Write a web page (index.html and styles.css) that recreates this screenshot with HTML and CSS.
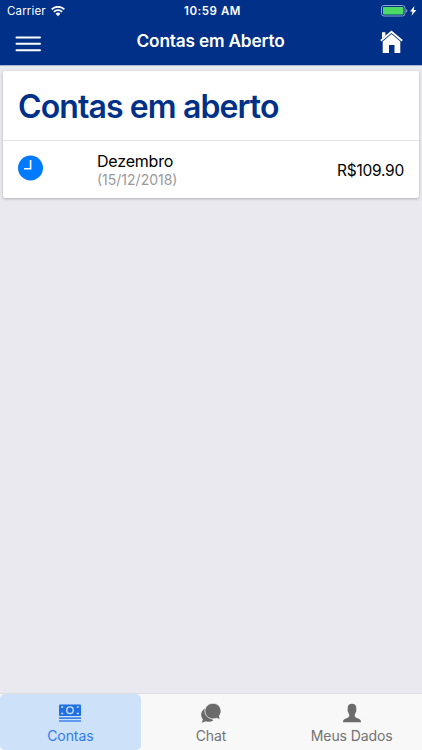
FILE: index.html
```html
<!DOCTYPE html>
<html lang="pt-BR">
<head>
    <meta charset="UTF-8">
    <meta name="viewport" content="width=device-width, initial-scale=1.0">
    <title>Contas em Aberto</title>
    <link rel="stylesheet" href="styles.css">
</head>
<body>
    <header class="header">
        <div class="status-bar">
            <div class="status-left">
                <span class="carrier">Carrier</span>
                <svg class="wifi" width="14" height="11" viewBox="0 0 14 11">
                    <path d="M0.7 3.4a9 9 0 0 1 12.6 0M2.9 5.8a5.8 5.8 0 0 1 8.2 0" fill="none" stroke="#fff" stroke-width="1.9"/>
                    <path d="M4.6 7.7a3.4 3.4 0 0 1 4.8 0L7 10.2z" fill="#fff"/>
                </svg>
            </div>
            <span class="time">10:59 AM</span>
            <div class="status-right">
                <svg width="37" height="12" viewBox="0 0 37 12">
                    <rect x="0.5" y="0.5" width="23.5" height="10.5" rx="2.5" fill="none" stroke="#8fa5cf"/>
                    <rect x="2" y="2" width="20.5" height="7.5" rx="1" fill="#4cd964"/>
                    <path d="M25.2 4v3.6q1.2-.4 1.2-1.8t-1.2-1.8z" fill="#8fa5cf"/>
                    <path d="M33.4 1L29 6.4h2.5l-1 4.4 4.9-5.9h-2.6z" fill="#fff"/>
                </svg>
            </div>
        </div>
        <div class="nav-bar">
            <button class="nav-button" type="button" aria-label="Menu">
                <svg width="26" height="16" viewBox="0 0 26 16">
                    <path d="M1.5 1.5H25M1.5 7.8H25M1.5 14.3H25" stroke="#fff" stroke-width="2" stroke-linecap="round"/>
                </svg>
            </button>
            <h1 class="nav-title">Contas em Aberto</h1>
            <button class="nav-button nav-home" type="button" aria-label="Home">
                <svg width="23" height="24" viewBox="0 0 23 24">
                    <path d="M0.8 10.8L11.5 1.7l10.7 9.1" fill="none" stroke="#fff" stroke-width="1.8"/>
                    <path d="M2 2.3h3.4v3.4L2 8.5zM11.5 3.9l8.8 7.6V23h-5.8v-8H9v8H2.7V11.5z" fill="#fff"/>
                </svg>
            </button>
        </div>
    </header>

    <main class="content">
        <section class="card">
            <h2 class="card-title">Contas em aberto</h2>
            <div class="bill">
                <svg class="clock" width="25" height="26" viewBox="0 0 25 26">
                    <circle cx="12.5" cy="13" r="12.5" fill="#007aff"/>
                    <path d="M12.6 5v8.8H6" fill="none" stroke="#fff" stroke-width="1.6"/>
                </svg>
                <div class="bill-info">
                    <span class="bill-month">Dezembro</span>
                    <span class="bill-date">(15/12/2018)</span>
                </div>
                <span class="bill-value">R$109.90</span>
            </div>
        </section>
    </main>

    <footer class="tabs">
        <a class="tab active">
            <svg width="22" height="20" viewBox="0 0 22 20">
                <rect y="1.500" width="22" height="11.500" rx="1" fill="#1f6fe5"/>
                <circle cx="11" cy="7.200" r="3.300" fill="none" stroke="#cde1f9" stroke-width="1.400"/>
                <path d="M2.200 4h2M17.800 4h2M2.200 10.500h2M17.800 10.500h2" stroke="#cde1f9" stroke-width="1.600"/>
                <path d="M0 15.100h22M0 18h22" stroke="#3f82ea" stroke-width="1.600"/>
            </svg>
            <span class="tab-label">Contas</span>
        </a>
        <a class="tab">
            <svg width="20" height="20" viewBox="0 0 20 20">
                <path d="M4 5.500C-.5 8-.8 13.300 1.900 16.200L.9 19.800l4-1.500c2.300.9 5.100.7 7.300-.8L4 5.500z" fill="#6b6b6b"/>
                <path d="M12 .3C16.500.3 20 3.800 20 8c0 2-.7 3.600-1.700 4.900l.9 3.700-4-1.400c-1 .4-2 .7-3.200.7-4.500 0-8.100-3.600-8.100-7.900S7.500.3 12 .3z" fill="#6b6b6b" stroke="#f8f8f8" stroke-width="0.800"/>
            </svg>
            <span class="tab-label">Chat</span>
        </a>
        <a class="tab">
            <svg width="20" height="20" viewBox="0 0 20 20">
                <path d="M10 .8c3 0 4.500 1.800 4.300 4.700 0 1 .4 1.700-.2 3-.4 1.700-1.300 2.300-1.400 3.600 0 1.800.6 2.300 2.200 2.900 2.600.9 4.100 1.600 4.100 4.300H1c0-2.700 1.500-3.400 4.100-4.300 1.600-.6 2.200-1.100 2.200-2.900-.1-1.300-1-1.900-1.400-3.600-.6-1.300-.2-2-.2-3C5.500 2.600 7 .8 10 .8z" fill="#6b6b6b"/>
            </svg>
            <span class="tab-label">Meus Dados</span>
        </a>
    </footer>
</body>
</html>
```
FILE: styles.css
```css
* {
    box-sizing: border-box;
}
body {
    display: flex;
    flex-direction: column;
    height: 100vh;
    margin: 0;
    font-family: Inter, "Liberation Sans", sans-serif;
    background-color: #e9e9ef;
    color: #000;
}
svg {
    display: block;
}
.header {
    height: 66px;
    background-color: #003087;
    border-bottom: 1px solid #a7b5d5;
    color: #fff;
}
.status-bar {
    display: grid;
    grid-template-columns: 1fr auto 1fr;
    align-items: center;
    height: 22px;
    padding: 0 4px 0 7px;
}
.status-left {
    display: flex;
    align-items: center;
    gap: 5px;
}
.carrier {
    font-size: 11.5px;
    letter-spacing: 0.15px;
}
.time {
    font-size: 11.5px;
    font-weight: 600;
    letter-spacing: 0.55px;
}
.status-right {
    display: flex;
    justify-content: flex-end;
}
.nav-bar {
    display: flex;
    align-items: center;
    justify-content: space-between;
    height: 38px;
    padding: 0 19px 0 15px;
}
.nav-button {
    padding: 0;
    border: none;
    background: none;
}
.nav-button:first-child {
    margin-top: 6px;
}
.nav-home {
    margin-top: 2px;
}
.nav-title {
    margin: -2px 0 0;
    font-size: 17.3px;
    font-weight: 600;
    letter-spacing: -0.2px;
}
.content {
    flex: 1;
    padding: 5px 3px;
}
.card {
    background-color: #fff;
    border-radius: 2px;
    box-shadow: 0 1px 3px rgba(0, 0, 0, 0.25);
}
.card-title {
    height: 70px;
    margin: 0;
    padding-left: 15px;
    border-bottom: 1px solid #e4e4e6;
    font-size: 32px;
    font-weight: 600;
    letter-spacing: -0.9px;
    line-height: 71px;
    color: #003087;
}
.bill {
    display: flex;
    align-items: center;
    height: 57px;
    padding: 0 15px;
}
.clock {
    margin-top: -3px;
}
.bill-info {
    display: flex;
    flex: 1;
    flex-direction: column;
    padding: 1px 0 0 54px;
}
.bill-month {
    font-size: 16px;
    letter-spacing: -0.2px;
    line-height: 19px;
}
.bill-date {
    font-size: 14px;
    line-height: 18px;
    color: #999;
}
.bill-value {
    padding-top: 1px;
    font-size: 15.5px;
    letter-spacing: -0.25px;
}
.tabs {
    display: flex;
    height: 56px;
    background-color: #f8f8f8;
    box-shadow: 0 -1px 0 #dedee2;
}
.tab {
    display: flex;
    flex: 1;
    flex-direction: column;
    align-items: center;
    padding-top: 9px;
    border-radius: 5px;
    color: #737373;
}
.tab.active {
    background-color: #cde1f9;
    color: #2f7cf0;
}
.tab-label {
    margin-top: 4px;
    font-size: 14px;
    letter-spacing: -0.1px;
    line-height: 18px;
}
```
